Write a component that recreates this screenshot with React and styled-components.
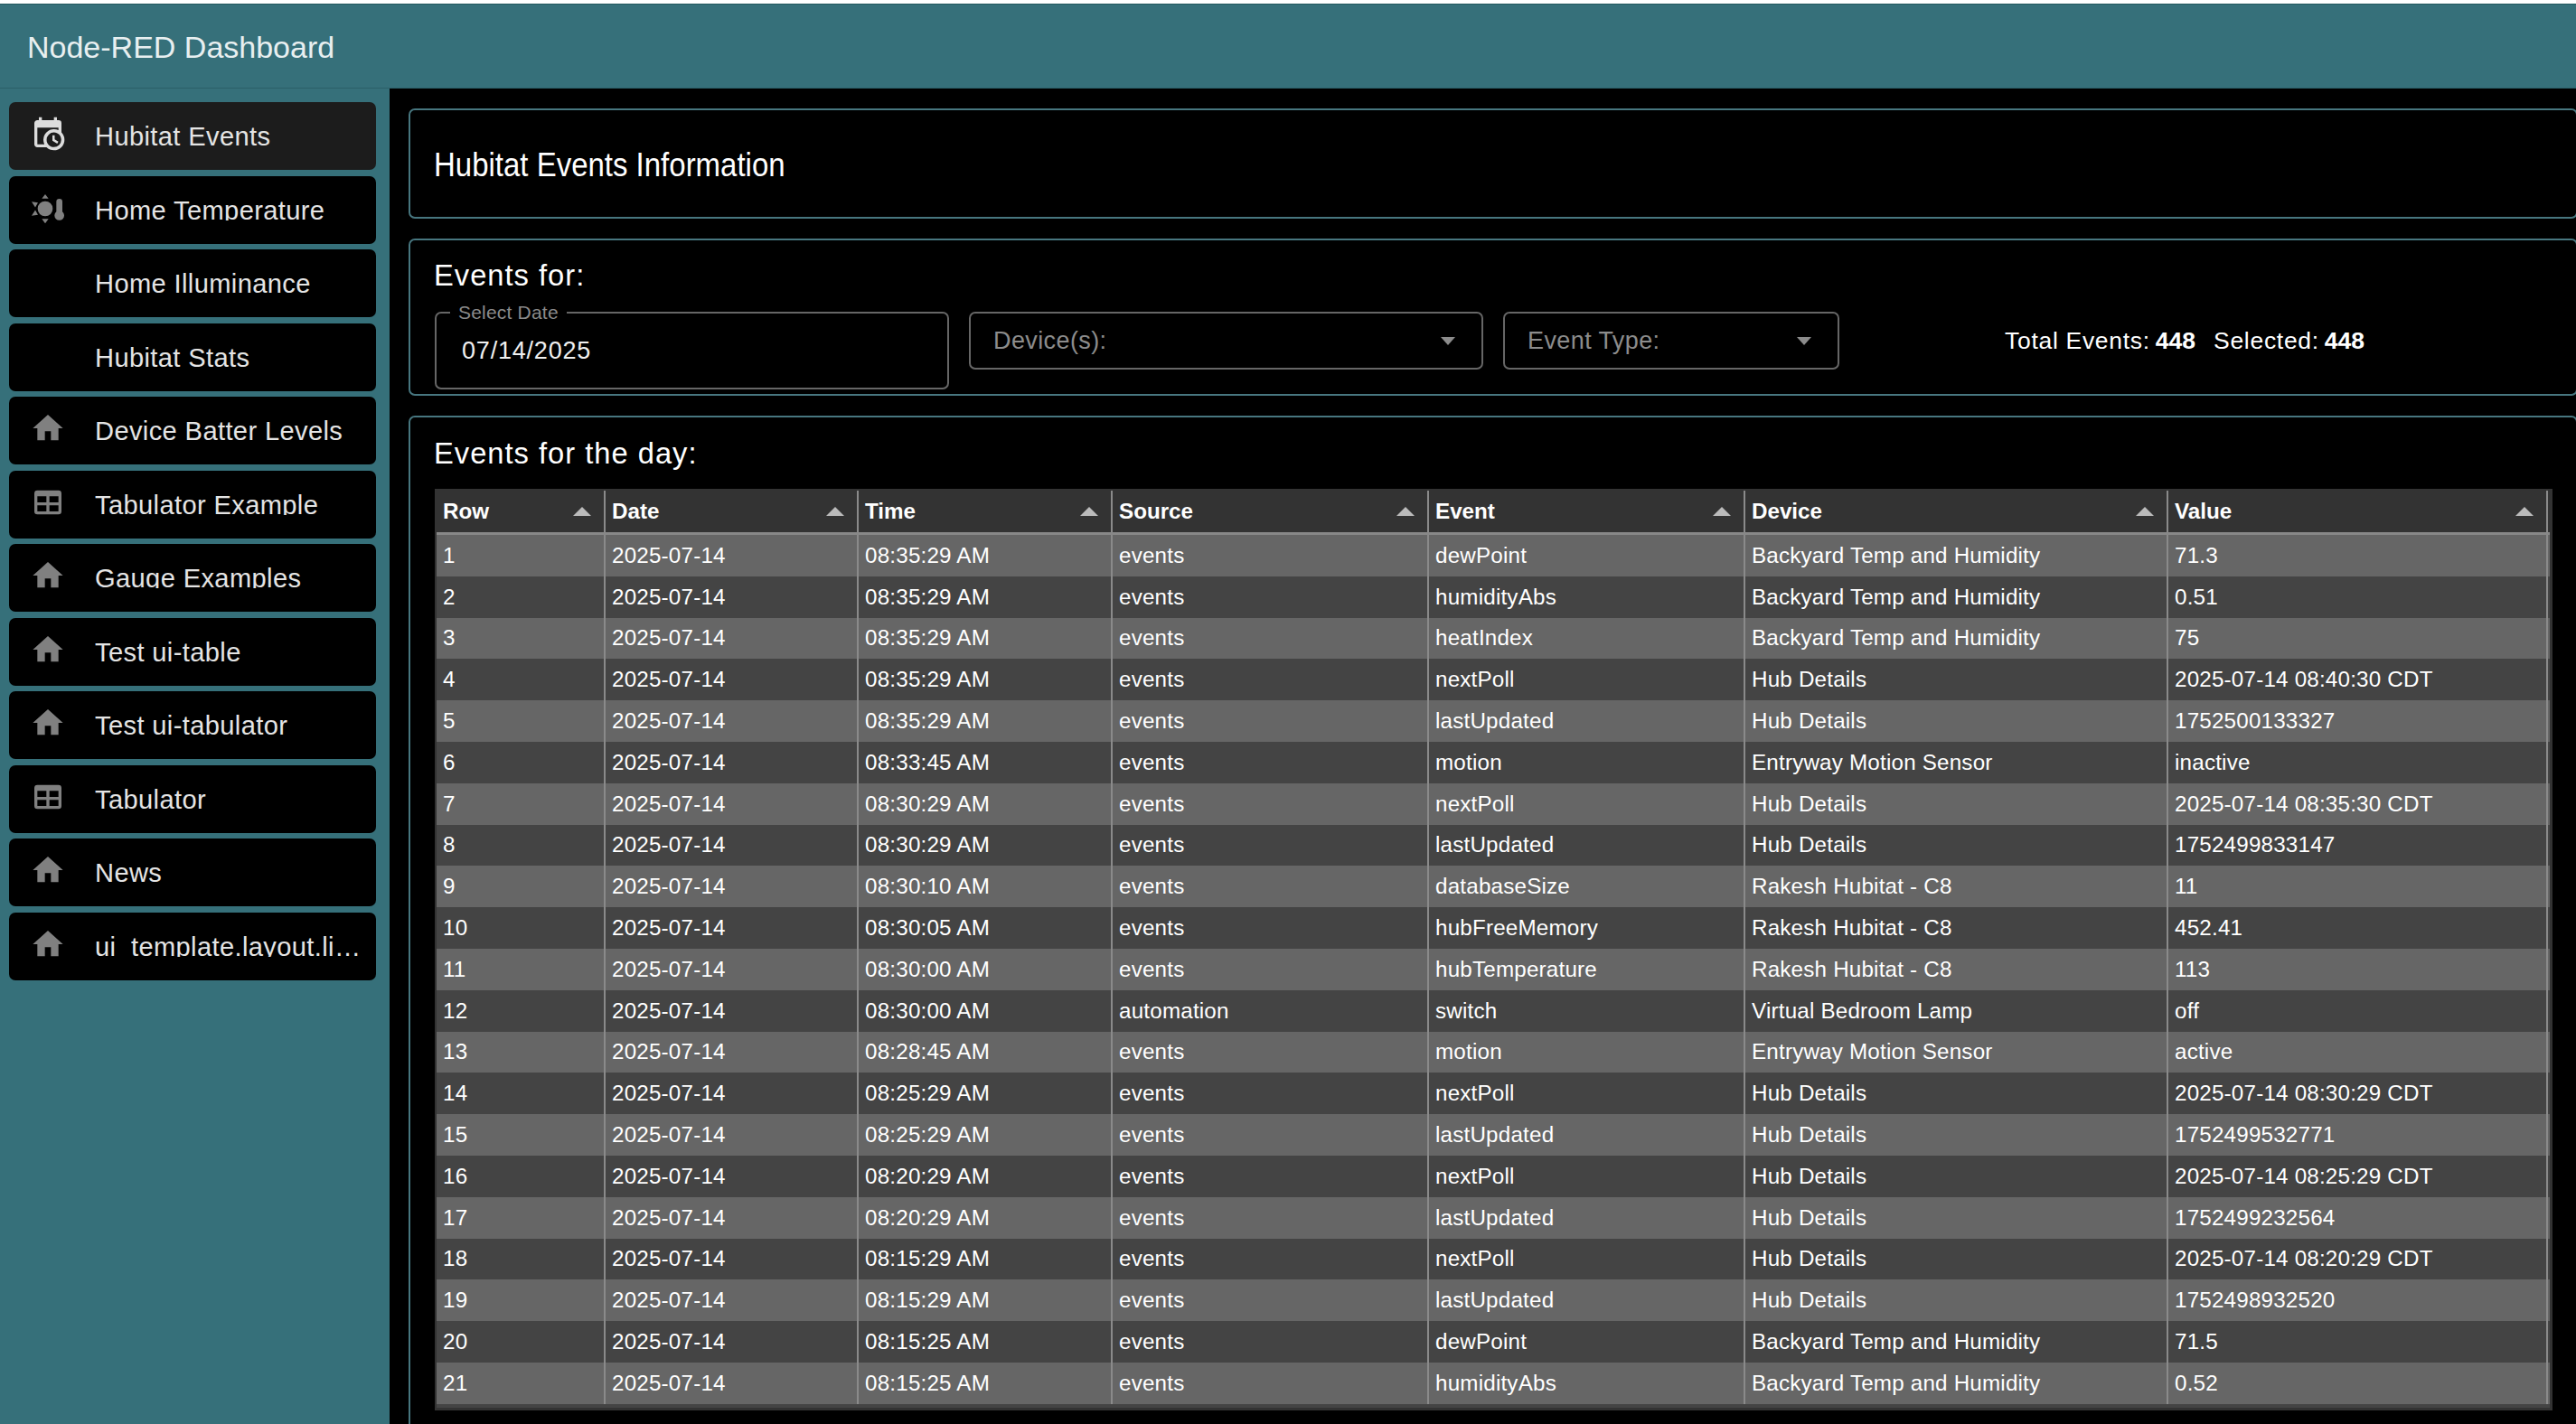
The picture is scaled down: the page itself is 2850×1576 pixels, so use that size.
import React from 'react';
import styled, { createGlobalStyle } from 'styled-components';

const GlobalStyle = createGlobalStyle`
  html, body { margin: 0; padding: 0; background: #000; }
  body { font-family: "Liberation Sans", Arial, sans-serif; }
  * { box-sizing: border-box; }
`;

const Page = styled.div`
  width: 2850px;
  height: 1576px;
  overflow: hidden;
  background: #000;
  border-top: 4px solid #fff;
  display: flex;
  flex-direction: column;
`;

const AppBar = styled.header`
  height: 94px;
  flex: none;
  background: #36707a;
  border-top: 1px solid #23585f;
  border-bottom: 1px solid #2b5f68;
  display: flex;
  align-items: center;
  padding: 2px 0 0 30px;
  color: #e8eff0;
  font-size: 34px;
`;

const Body = styled.div`
  flex: 1;
  display: flex;
  min-height: 0;
`;

const Sidebar = styled.nav`
  width: 431px;
  flex: none;
  background: #36707a;
  padding: 15px 15px 0 10px;
  display: flex;
  flex-direction: column;
  gap: 6.5px;
`;

const NavItem = styled.div`
  height: 75px;
  flex: none;
  border-radius: 7px;
  background: ${p => (p.$active ? '#1c1c1c' : '#000')};
  display: flex;
  align-items: center;
  padding-left: 23px;
`;

const NavIcon = styled.span`
  width: 40px;
  height: 40px;
  flex: none;
  margin: -5px 32px 0 0;
  color: ${p => (p.$active ? '#dcdcdc' : '#808080')};
  svg { display: block; width: 40px; height: 40px; fill: currentColor; }
`;

const NavLabel = styled.span`
  flex: 1;
  min-width: 0;
  align-self: flex-start;
  margin-top: 23px;
  color: #e4e4e4;
  font-size: 29.08px;
  letter-spacing: 0.013em;
  line-height: 30px;
  height: 26px;
  overflow: hidden;
  white-space: nowrap;
  text-overflow: ellipsis;
  padding-right: 12px;
`;

const Main = styled.main`
  flex: 1;
  min-width: 0;
  padding: 22px 0 0 21px;
  display: flex;
  flex-direction: column;
  gap: 22px;
  margin-right: -2px;
`;

const Panel = styled.section`
  flex: none;
  height: ${p => p.$height}px;
  border: 2px solid #47767f;
  border-radius: 7px;
  padding: ${p => p.$padding};
  background: #000;
`;

const PageTitle = styled.h1`
  margin: 0 0 0 -1px;
  color: #fff;
  font-size: 37.7px;
  font-weight: 400;
  line-height: 42px;
  transform: scaleX(0.875);
  transform-origin: left center;
  white-space: nowrap;
`;

const GroupTitle = styled.h2`
  margin: 0 0 0 -1px;
  color: #fff;
  font-size: 32.7px;
  font-weight: 400;
  line-height: 38px;
  letter-spacing: 1px;
`;

const FilterRow = styled.div`
  display: flex;
  align-items: flex-start;
  margin-top: 21px;
`;

const DateField = styled.div`
  position: relative;
  width: 569px;
  height: 86px;
  margin-right: 22px;
  border: 2px solid #666;
  border-radius: 7px;
  padding: 25px 0 0 28px;
  color: #f0f0f0;
  font-size: 27px;
  letter-spacing: 0.8px;
  line-height: 32px;
`;

const FloatingLabel = styled.span`
  position: absolute;
  top: -11px;
  left: 15px;
  padding: 0 9px;
  background: #000;
  color: #8a8a8a;
  font-size: 21px;
  letter-spacing: 0.2px;
  line-height: 20px;
`;

const Select = styled.div`
  width: ${p => p.$width}px;
  height: 64px;
  margin-right: 22px;
  border: 2px solid #666;
  border-radius: 7px;
  padding: 0 26px 0 25px;
  display: flex;
  align-items: center;
  justify-content: space-between;
  color: #8c8c8c;
  font-size: 27px;
  letter-spacing: 0.4px;
`;

const Caret = styled.span`
  width: 0;
  height: 0;
  border-left: 8px solid transparent;
  border-right: 8px solid transparent;
  border-top: 9px solid #8c8c8c;
  margin-right: 3px;
`;

const Totals = styled.div`
  margin-left: 161px;
  height: 64px;
  display: flex;
  align-items: center;
  gap: 20px;
  color: #fff;
  font-size: 26.5px;
`;

const Total = styled.span`
  white-space: nowrap;
  letter-spacing: 0.7px;
`;

const TotalValue = styled.b`
  margin-left: 6px;
  letter-spacing: 0;
`;

const Table = styled.div`
  width: 2343px;
  height: 1020px;
  margin-top: 20px;
  background: #333;
  padding: 2px 3px 3px 2px;
  display: flex;
  flex-direction: column;
`;

const COLS = '187px 280px 281px 350px 350px 468px 420px';

const HeaderRow = styled.div`
  height: 49px;
  flex: none;
  display: grid;
  grid-template-columns: ${COLS};
  border-bottom: 3px solid #888;
`;

const HeaderCell = styled.div`
  border-right: 2px solid #8a8a8a;
  padding: 0 8px 1px 7px;
  display: flex;
  align-items: center;
  justify-content: space-between;
  color: #fff;
  font-size: 24.2px;
  font-weight: 700;
`;

const SortArrow = styled.span`
  width: 0;
  height: 0;
  margin-right: 6px;
  border-left: 10px solid transparent;
  border-right: 10px solid transparent;
  border-bottom: 10px solid #bbb;
`;

const TableBody = styled.div`
  flex: 1;
  min-height: 0;
  overflow: hidden;
  background: #444;
`;

const Row = styled.div`
  height: 45.8px;
  display: grid;
  grid-template-columns: ${COLS};
  background: ${p => (p.$odd ? '#666' : '#444')};
`;

const Cell = styled.div`
  border-right: 2px solid #8a8a8a;
  padding: 0 0 0 7px;
  display: flex;
  align-items: center;
  color: #fff;
  font-size: 24.2px;
  letter-spacing: 0.2px;
  white-space: nowrap;
  overflow: hidden;
`;

const HOME = 'M10,20V14H14V20H19V12H22L12,3L2,12H5V20H10Z';
const TABLE = 'M5,4H19A2,2 0 0,1 21,6V18A2,2 0 0,1 19,20H5A2,2 0 0,1 3,18V6A2,2 0 0,1 5,4M5,8V12H11V8H5M13,8V12H19V8H13M5,14V18H11V14H5M13,14V18H19V14H13Z';
const CALENDAR = 'M15,13H16.5V15.82L18.94,17.23L18.19,18.53L15,16.69V13M19,8H5V19H9.67C9.24,18.09 9,17.07 9,16A7,7 0 0,1 16,9C17.07,9 18.09,9.24 19,9.67V8M5,21C3.89,21 3,20.1 3,19V5C3,3.89 3.89,3 5,3H6V1H8V3H16V1H18V3H19A2,2 0 0,1 21,5V11.1C22.24,12.36 23,14.09 23,16A7,7 0 0,1 16,23C14.09,23 12.36,22.24 11.1,21H5M16,11.15A4.85,4.85 0 0,0 11.15,16C11.15,18.68 13.32,20.85 16,20.85A4.85,4.85 0 0,0 20.85,16C20.85,13.32 18.68,11.15 16,11.15Z';
const SUN_THERMO = 'M10.2,7.6A5,5 0 1,1 10.2,17.6A5,5 0 1,1 10.2,7.6ZM10.2,3L12.4,5.9H8ZM10.2,22.4L8,19.4H12.4ZM1.2,8L5.4,8.6L3.6,11.7ZM1.2,17.2L3.6,13.5L5.4,16.6ZM19.6,6A2,2 0 0,1 21.6,8V14.6A3.2,3.2 0 1,1 17.6,14.6V8A2,2 0 0,1 19.6,6Z';

const Icon = ({ d }) => (
  <svg viewBox="0 0 24 24" aria-hidden="true"><path d={d} /></svg>
);

const navItems = [
  ['Hubitat Events', CALENDAR, true],
  ['Home Temperature', SUN_THERMO],
  ['Home Illuminance', null],
  ['Hubitat Stats', null],
  ['Device Batter Levels', HOME],
  ['Tabulator Example', TABLE],
  ['Gauge Examples', HOME],
  ['Test ui-table', HOME],
  ['Test ui-tabulator', HOME],
  ['Tabulator', TABLE],
  ['News', HOME],
  ['ui_template.layout.list.example', HOME],
];

const columns = ['Row', 'Date', 'Time', 'Source', 'Event', 'Device', 'Value'];

const BY = 'Backyard Temp and Humidity';
const HUB = 'Hub Details';
const RH = 'Rakesh Hubitat - C8';
const EN = 'Entryway Motion Sensor';
const rows = [
  ['08:35:29 AM', 'events', 'dewPoint', BY, '71.3'],
  ['08:35:29 AM', 'events', 'humidityAbs', BY, '0.51'],
  ['08:35:29 AM', 'events', 'heatIndex', BY, '75'],
  ['08:35:29 AM', 'events', 'nextPoll', HUB, '2025-07-14 08:40:30 CDT'],
  ['08:35:29 AM', 'events', 'lastUpdated', HUB, '1752500133327'],
  ['08:33:45 AM', 'events', 'motion', EN, 'inactive'],
  ['08:30:29 AM', 'events', 'nextPoll', HUB, '2025-07-14 08:35:30 CDT'],
  ['08:30:29 AM', 'events', 'lastUpdated', HUB, '1752499833147'],
  ['08:30:10 AM', 'events', 'databaseSize', RH, '11'],
  ['08:30:05 AM', 'events', 'hubFreeMemory', RH, '452.41'],
  ['08:30:00 AM', 'events', 'hubTemperature', RH, '113'],
  ['08:30:00 AM', 'automation', 'switch', 'Virtual Bedroom Lamp', 'off'],
  ['08:28:45 AM', 'events', 'motion', EN, 'active'],
  ['08:25:29 AM', 'events', 'nextPoll', HUB, '2025-07-14 08:30:29 CDT'],
  ['08:25:29 AM', 'events', 'lastUpdated', HUB, '1752499532771'],
  ['08:20:29 AM', 'events', 'nextPoll', HUB, '2025-07-14 08:25:29 CDT'],
  ['08:20:29 AM', 'events', 'lastUpdated', HUB, '1752499232564'],
  ['08:15:29 AM', 'events', 'nextPoll', HUB, '2025-07-14 08:20:29 CDT'],
  ['08:15:29 AM', 'events', 'lastUpdated', HUB, '1752498932520'],
  ['08:15:25 AM', 'events', 'dewPoint', BY, '71.5'],
  ['08:15:25 AM', 'events', 'humidityAbs', BY, '0.52'],
];

export default function App() {
  return (
    <>
      <GlobalStyle />
      <Page>
        <AppBar>Node-RED Dashboard</AppBar>
        <Body>
          <Sidebar>
            {navItems.map(([label, icon, active]) => (
              <NavItem key={label} $active={active}>
                <NavIcon $active={active}>{icon && <Icon d={icon} />}</NavIcon>
                <NavLabel>{label}</NavLabel>
              </NavItem>
            ))}
          </Sidebar>
          <Main>
            <Panel $height={122} $padding="39px 0 0 27px">
              <PageTitle>Hubitat Events Information</PageTitle>
            </Panel>
            <Panel $height={174} $padding="20px 0 0 27px">
              <GroupTitle>Events for:</GroupTitle>
              <FilterRow>
                <DateField>
                  <FloatingLabel>Select Date</FloatingLabel>
                  07/14/2025
                </DateField>
                <Select $width={569}>Device(s):<Caret /></Select>
                <Select $width={372}>Event Type:<Caret /></Select>
                <Totals>
                  <Total>Total Events:<TotalValue>448</TotalValue></Total>
                  <Total>Selected:<TotalValue>448</TotalValue></Total>
                </Totals>
              </FilterRow>
            </Panel>
            <Panel $height={1200} $padding="21px 0 0 27px">
              <GroupTitle>Events for the day:</GroupTitle>
              <Table>
                <HeaderRow>
                  {columns.map(c => (
                    <HeaderCell key={c}>{c}<SortArrow /></HeaderCell>
                  ))}
                </HeaderRow>
                <TableBody>
                  {rows.map(([time, source, event, device, value], i) => (
                    <Row key={i} $odd={i % 2 === 0}>
                      <Cell>{i + 1}</Cell>
                      <Cell>2025-07-14</Cell>
                      <Cell>{time}</Cell>
                      <Cell>{source}</Cell>
                      <Cell>{event}</Cell>
                      <Cell>{device}</Cell>
                      <Cell>{value}</Cell>
                    </Row>
                  ))}
                </TableBody>
              </Table>
            </Panel>
          </Main>
        </Body>
      </Page>
    </>
  );
}
